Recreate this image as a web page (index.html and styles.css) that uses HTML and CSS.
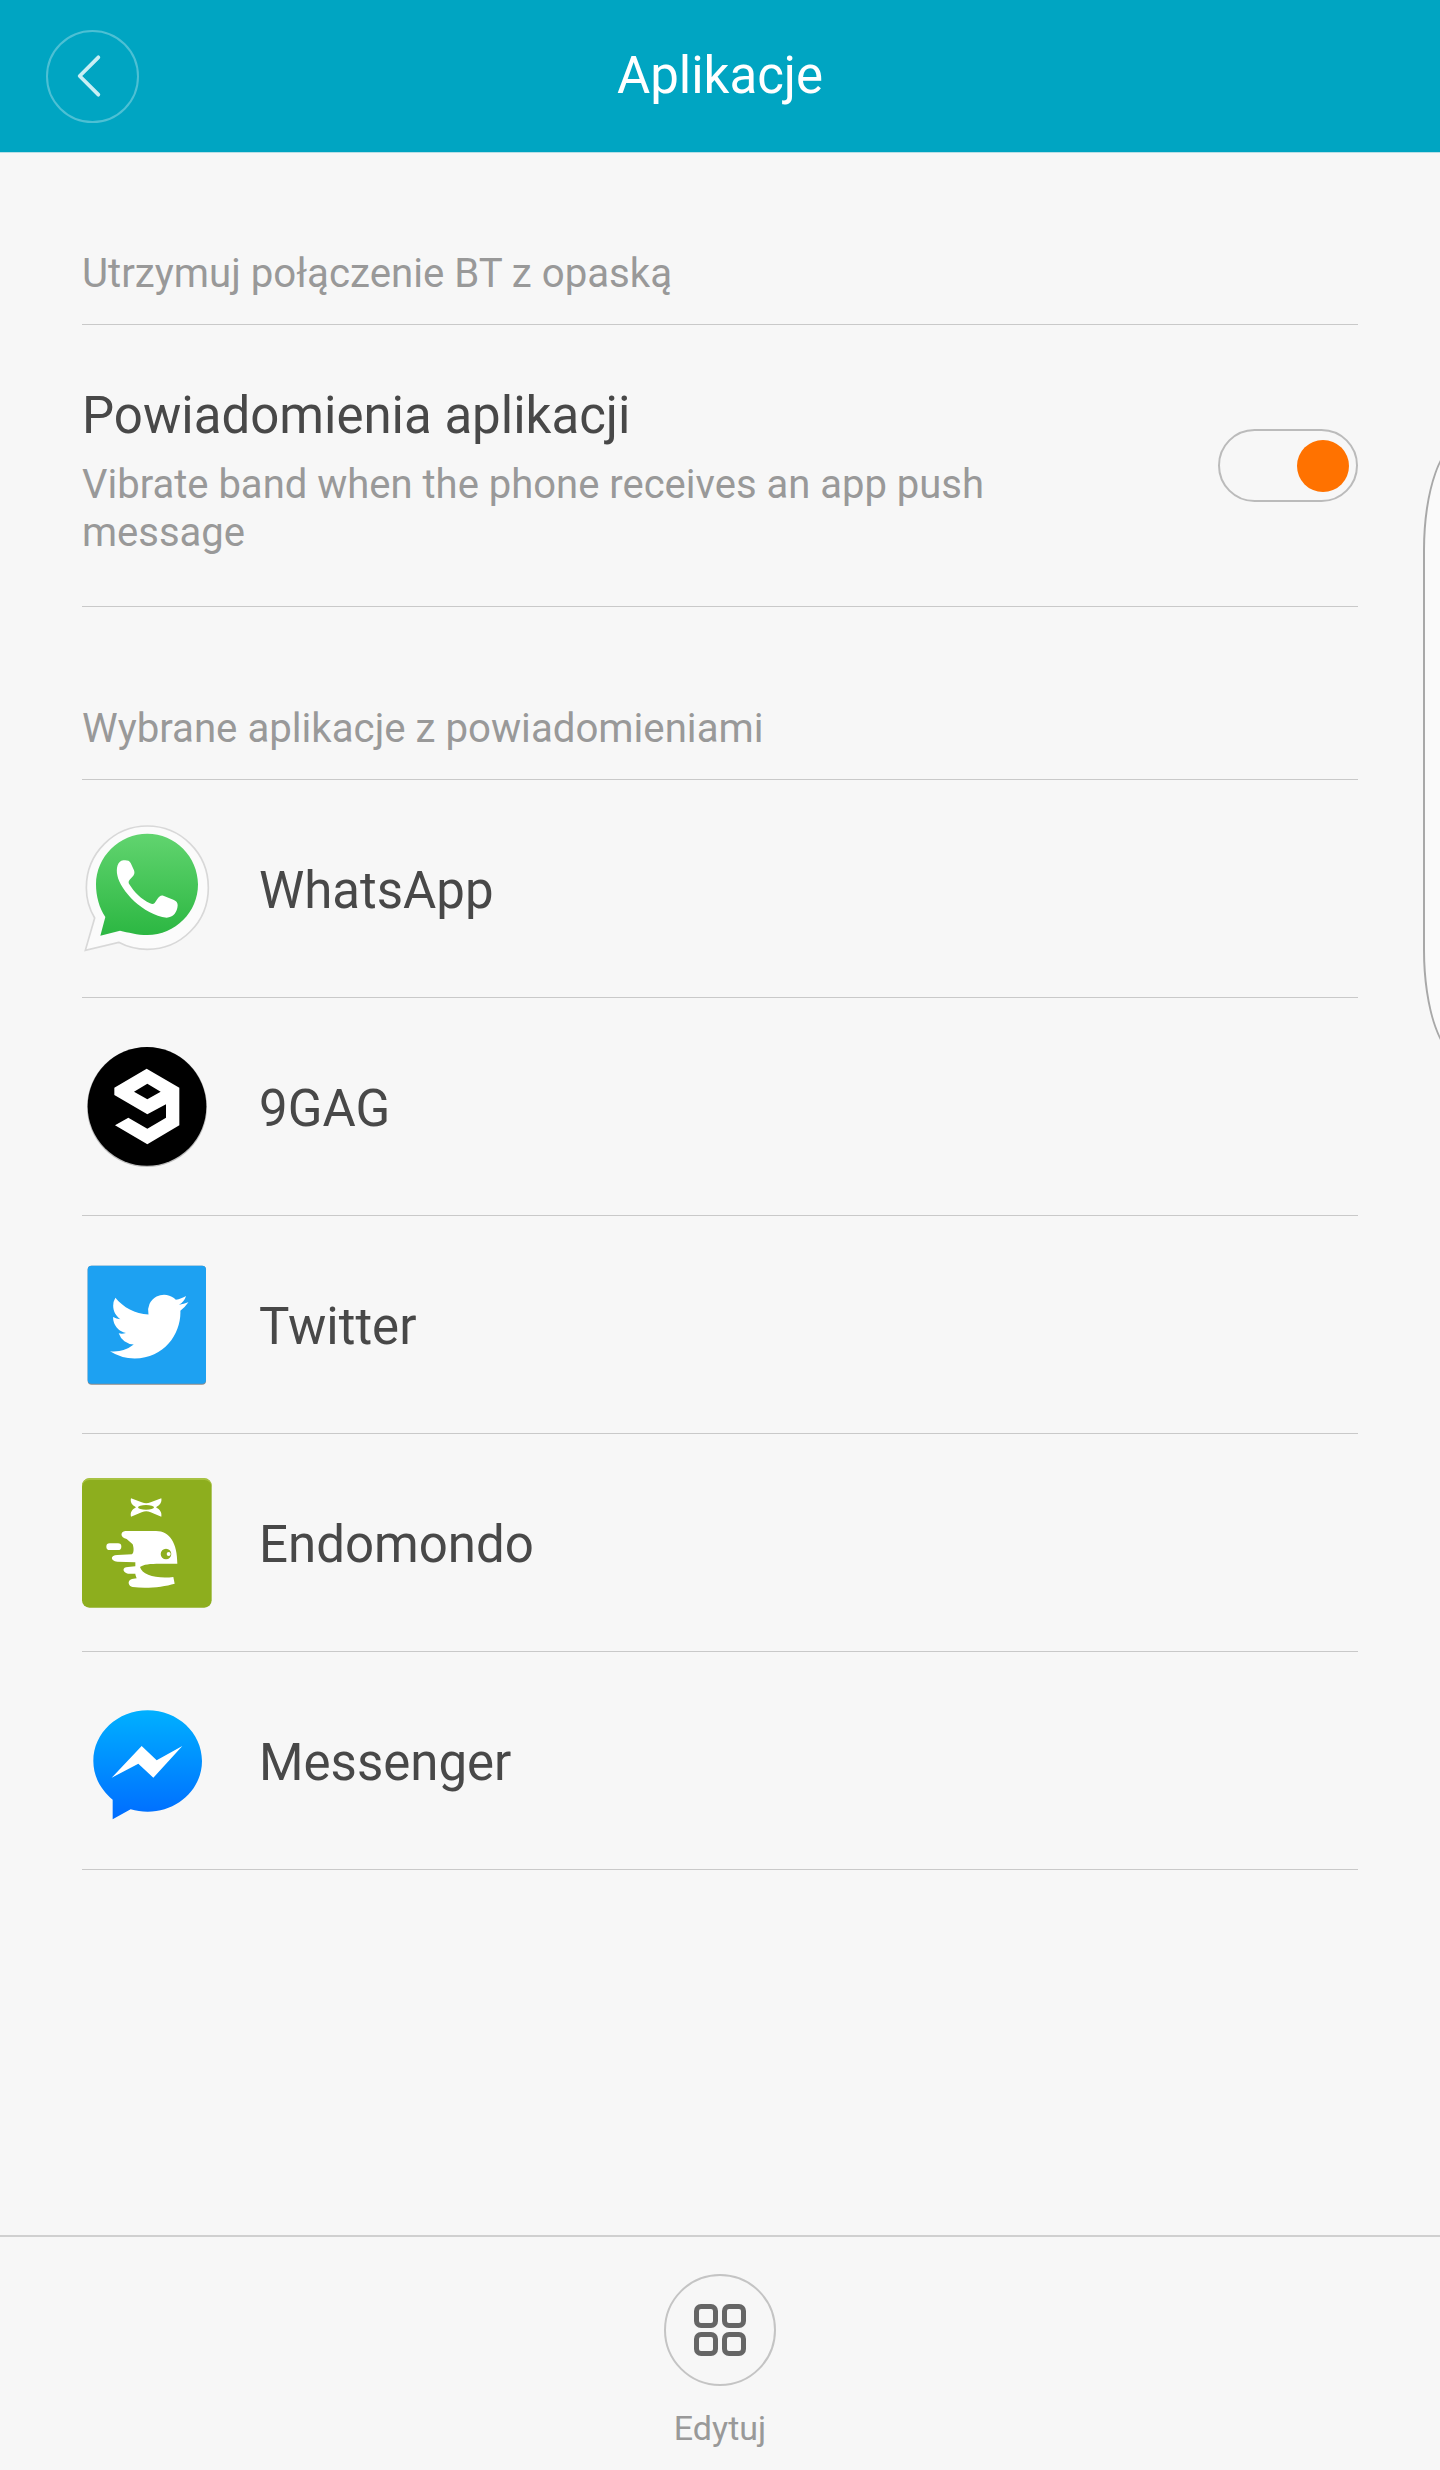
FILE: index.html
```html
<!DOCTYPE html>
<html lang="pl">
<head>
    <meta charset="UTF-8">
    <meta name="viewport" content="width=device-width, initial-scale=1.0">
    <title>Aplikacje</title>
    <link rel="stylesheet" href="styles.css">
</head>
<body>
    <div class="page">
        <header class="header">
            <div class="back-button">
                <svg class="back-icon" viewBox="0 0 30 48"><path d="M25 4 L5 24 L25 44"/></svg>
            </div>
            <h1>Aplikacje</h1>
        </header>

        <main class="content">
            <div class="section-label">Utrzymuj połączenie BT z opaską</div>
            <div class="toggle-row">
                <div class="toggle-text">
                    <div class="toggle-title">Powiadomienia aplikacji</div>
                    <div class="toggle-desc">Vibrate band when the phone receives an app push message</div>
                </div>
                <div class="toggle"><span class="toggle-knob"></span></div>
            </div>

            <div class="section-label section-label-apps">Wybrane aplikacje z powiadomieniami</div>

            <div class="app-row">
                <svg class="app-icon" viewBox="66 41 390 390">
                    <defs>
                        <linearGradient id="waGreen" x1="0" y1="0" x2="0" y2="1">
                            <stop offset="0" stop-color="#61d46f"/>
                            <stop offset="1" stop-color="#2cb742"/>
                        </linearGradient>
                    </defs>
                    <path d="M262 47 C362 47 445 128 445 232 C445 336 362 417 262 417 C230 417 202 410 176 396 L76 420 L104 323 C88 296 79 265 79 232 C79 128 162 47 262 47 Z" fill="#fbfbfb" stroke="#d8d8d8" stroke-width="5"/>
                    <path d="M262 70 C346 70 414 140 414 222 C414 306 346 374 262 374 C232 374 204 366 180 361 L121 376 L136 320 C118 294 108 258 108 222 C108 140 178 70 262 70 Z" fill="url(#waGreen)"/>
                    <path d="M190 150 C172 152 168 175 172 195 C180 240 250 315 320 322 C340 322 352 305 353 285 C353 275 348 272 340 268 L310 256 C302 254 298 258 292 266 L284 278 C280 282 276 282 270 279 C245 268 222 245 208 222 C205 217 205 213 209 208 L220 196 C224 190 224 186 222 180 L212 158 C208 150 200 149 190 150 Z" fill="#fff"/>
                </svg>
                <span class="app-name">WhatsApp</span>
            </div>

            <div class="app-row">
                <svg class="app-icon" viewBox="66 38 390 390">
                    <circle cx="261" cy="233" r="180" fill="#bdbdbd"/>
                    <circle cx="261" cy="231" r="178" fill="#000"/>
                    <path fill-rule="evenodd" d="M260 118 L358 175 V288 L262 345 L165 288 L205 265 L262 298 L318 265 V225 L262 255 L163 197 V175 Z M262 163 L222 187 L262 210 L302 187 Z" fill="#fff"/>
                </svg>
                <span class="app-name">9GAG</span>
            </div>

            <div class="app-row">
                <svg class="app-icon" viewBox="66 30 390 390">
                    <rect x="83" y="47" width="355" height="357" rx="12" fill="#8a8a8a"/>
                    <rect x="83" y="47" width="355" height="354" rx="12" fill="#1da1f2"/>
                    <path transform="translate(150 112) scale(9.8)" fill="#fff" d="M23.953 4.57a10 10 0 01-2.825.775 4.958 4.958 0 002.163-2.723c-.951.555-2.005.959-3.127 1.184a4.92 4.92 0 00-8.384 4.482C7.69 8.095 4.067 6.13 1.64 3.162a4.822 4.822 0 00-.666 2.475c0 1.71.87 3.213 2.188 4.096a4.904 4.904 0 01-2.228-.616v.06a4.923 4.923 0 003.946 4.827 4.996 4.996 0 01-2.212.085 4.936 4.936 0 004.604 3.417 9.867 9.867 0 01-6.102 2.105c-.39 0-.779-.023-1.17-.067a13.995 13.995 0 007.557 2.209c9.053 0 13.998-7.496 13.998-13.985 0-.21 0-.42-.015-.63A9.935 9.935 0 0024 4.59z"/>
                </svg>
                <span class="app-name">Twitter</span>
            </div>

            <div class="app-row">
                <svg class="app-icon" viewBox="66 39 390 390">
                    <rect x="66" y="40" width="389" height="388" rx="22" fill="#8dae1e"/>
                    <path d="M88 40 H433 A22 22 0 0 1 455 62 V66 A22 22 0 0 0 433 45 H88 A22 22 0 0 0 66 66 V62 A22 22 0 0 1 88 40 Z" fill="#a8c240"/>
                    <g fill="#fff">
                        <path d="M213 100 L245 112 C255 116 262 116 272 112 L304 100 C306 112 300 120 288 127 C300 134 306 142 304 155 L272 142 C262 138 255 138 245 142 L213 155 C210 142 216 134 228 127 C216 120 210 112 213 100 Z"/>
                        <path d="M196 198 H288 C330 198 352 235 352 296 L300 296 C270 296 250 298 240 306 C246 330 290 342 340 336 L344 356 C310 366 260 372 218 366 C205 364 200 346 216 342 L230 340 C228 334 226 330 226 326 L204 326 C186 322 186 306 204 306 L226 304 C226 300 226 296 226 292 L172 290 C150 288 150 270 172 270 L216 268 C222 264 222 250 218 238 L200 222 C180 218 180 200 196 198 Z"/>
                        <rect x="139" y="235" width="45" height="20" rx="10"/>
                    </g>
                    <ellipse cx="258" cy="127" rx="24" ry="7" fill="#8dae1e"/>
                    <circle cx="318" cy="267" r="16" fill="#8dae1e"/>
                    <circle cx="326" cy="267" r="6" fill="#fff"/>
                </svg>
                <span class="app-name">Endomondo</span>
            </div>

            <div class="app-row">
                <svg class="app-icon" viewBox="66 35 390 390">
                    <defs>
                        <linearGradient id="fbBlue" x1="0" y1="0" x2="0" y2="1">
                            <stop offset="0" stop-color="#00b0ff"/>
                            <stop offset="1" stop-color="#006cff"/>
                        </linearGradient>
                    </defs>
                    <path d="M263 78 C353 78 426 146 426 230 C426 314 353 382 263 382 C245 382 228 380 212 375 L158 405 V346 C124 318 100 278 100 230 C100 146 173 78 263 78 Z" fill="url(#fbBlue)"/>
                    <path d="M155 280 L245 185 L290 228 L367 185 L280 280 L235 238 Z" fill="#fff"/>
                </svg>
                <span class="app-name">Messenger</span>
            </div>
        </main>

        <footer class="footer">
            <div class="edit-button">
                <div class="edit-grid">
                    <span></span><span></span><span></span><span></span>
                </div>
            </div>
            <div class="edit-label">Edytuj</div>
        </footer>

        <!-- edge of the floating panel peeking in from the right -->
        <div class="side-panel"></div>
    </div>
</body>
</html>
```

FILE: styles.css
```css
* {
    box-sizing: border-box;
}
body {
    font-family: Roboto, "Noto Sans", sans-serif;
    margin: 0;
    background-color: #f7f7f7;
}
.page {
    position: relative;
    display: flex;
    flex-direction: column;
    height: 2470px;
    overflow: hidden;
}
.header {
    display: grid;
    grid-template-columns: 1fr auto 1fr;
    align-items: center;
    height: 153px;
    padding: 0 46px;
    background-color: #00a5c2;
    border-bottom: 1px solid #b9dfe6;
}
.header h1 {
    margin: 0;
    font-size: 51px;
    font-weight: 400;
    line-height: 60px;
    color: #fff;
}
.back-button {
    display: flex;
    align-items: center;
    justify-content: center;
    width: 93px;
    height: 93px;
    padding-right: 8px;
    border: 2px solid rgba(255,255,255,0.3);
    border-radius: 50%;
}
.back-icon {
    width: 28px;
    height: 46px;
    fill: none;
    stroke: #c9eef4;
    stroke-width: 4;
    stroke-linecap: round;
    stroke-linejoin: round;
}
.content {
    flex: 1;
    padding: 0 82px;
}
.section-label {
    height: 172px;
    padding-top: 96px;
    font-size: 40.2px;
    line-height: 50px;
    color: #999;
    border-bottom: 1px solid #c9c9c9;
}
.section-label-apps {
    height: 173px;
    padding-top: 97px;
}
.toggle-row {
    display: flex;
    align-items: center;
    justify-content: space-between;
    height: 282px;
    border-bottom: 1px solid #c9c9c9;
}
.toggle-text {
    padding-top: 12px;
}
.toggle-title {
    font-size: 51px;
    line-height: 60px;
    color: #484848;
    margin-bottom: 15px;
}
.toggle-desc {
    max-width: 960px;
    font-size: 40px;
    line-height: 48px;
    color: #999;
}
.toggle {
    display: flex;
    align-items: center;
    justify-content: flex-end;
    width: 140px;
    height: 73px;
    padding-right: 7px;
    border: 2px solid #bbb;
    border-radius: 37px;
}
.toggle-knob {
    width: 52px;
    height: 52px;
    background-color: #ff7200;
    border-radius: 50%;
}
.app-row {
    display: flex;
    align-items: center;
    gap: 47px;
    height: 218px;
    border-bottom: 1px solid #c9c9c9;
}
.app-icon {
    flex: none;
    width: 130px;
    height: 130px;
}
.app-name {
    padding-top: 4px;
    font-size: 51px;
    color: #484848;
}
.footer {
    display: flex;
    flex-direction: column;
    align-items: center;
    height: 235px;
    padding-top: 37px;
    border-top: 2px solid #d0d0d0;
}
.edit-button {
    display: flex;
    align-items: center;
    justify-content: center;
    width: 112px;
    height: 112px;
    border: 2px solid #c4c4c4;
    border-radius: 50%;
}
.edit-grid {
    display: grid;
    grid-template-columns: 24px 24px;
    grid-auto-rows: 24px;
    gap: 4px;
}
.edit-grid span {
    border: 5px solid #666;
    border-radius: 7px;
}
.edit-label {
    margin-top: 22px;
    font-size: 34px;
    line-height: 40px;
    color: #999;
}
.side-panel {
    position: absolute;
    top: 440px;
    left: 1423px;
    width: 80px;
    height: 620px;
    background-color: #fafafa;
    border: 2px solid #a8a8a8;
    border-radius: 40px / 110px;
}
```
